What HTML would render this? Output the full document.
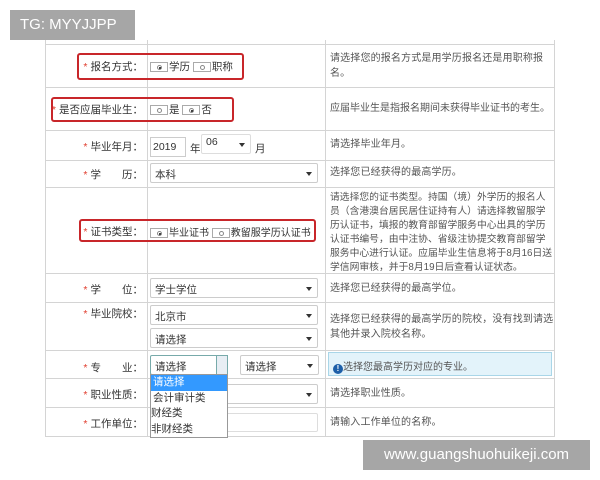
<!DOCTYPE html>
<html><head><meta charset="utf-8"><style>
*{margin:0;padding:0;box-sizing:border-box}
body{width:600px;height:480px;background:#fff;position:relative;overflow:hidden;font-family:"Liberation Sans","Noto Sans CJK SC",sans-serif;font-size:10.5px;color:#333}
.a{position:absolute}
.h{position:absolute;height:1px;background:#d4d4d4;left:45px;width:510px}
.v{position:absolute;width:1px;background:#d4d4d4;top:40px;height:397px}
.lb{position:absolute;right:457px;text-align:right;white-space:nowrap;font-size:10.5px}
.lb b{color:#e03a2a;font-weight:normal;margin-right:3px}
.d{position:absolute;left:330px;width:224px;color:#555;line-height:14.5px;font-size:10px;letter-spacing:0.15px}
.sel{position:absolute;height:20px;border:1px solid #ccc;border-radius:2px;background:#fff;padding:3px 4px;font-size:10.5px;color:#333}
.sel:after{content:"";position:absolute;right:5px;top:8px;border:3px solid transparent;border-top:4px solid #333}
.rad{display:inline-block;width:18px;height:10px;border:1px solid #aaa;vertical-align:middle;position:relative;margin-right:1px}
.rad:after{content:"";position:absolute;left:6px;top:1.5px;width:5px;height:5px;border:1px solid #888;border-radius:50%;box-sizing:border-box}
.rad.on:before{content:"";position:absolute;left:8px;top:3.5px;width:2px;height:2px;background:#000;border-radius:50%}
.red{position:absolute;border:2px solid #c8262a;border-radius:3px}
</style></head><body>
<div class="v" style="left:45px"></div><div class="v" style="left:147px"></div><div class="v" style="left:325px"></div><div class="v" style="left:554px"></div>
<div class="h" style="top:44px"></div><div class="h" style="top:87px"></div><div class="h" style="top:130px"></div><div class="h" style="top:160px"></div><div class="h" style="top:187px"></div><div class="h" style="top:273px"></div><div class="h" style="top:302px"></div><div class="h" style="top:350px"></div><div class="h" style="top:378px"></div><div class="h" style="top:407px"></div><div class="h" style="top:436px"></div>

<div class="a" style="left:10px;top:10px;width:125px;height:30px;background:#a6a6a6;color:#fff;font-size:15px;line-height:30px;padding-left:10px">TG: MYYJJPP</div>

<div class="lb" style="top:59px"><b>*</b>报名方式：</div>
<div class="a" style="left:150px;top:59px"><span class="rad on"></span>学历 <span class="rad"></span>职称</div>
<div class="red" style="left:77px;top:53px;width:167px;height:27px"></div>
<div class="d" style="top:52px">请选择您的报名方式是用学历报名还是用职称报名。</div>

<div class="lb" style="top:102px"><b>*</b>是否应届毕业生：</div>
<div class="a" style="left:150px;top:102px"><span class="rad"></span>是 <span class="rad on"></span>否</div>
<div class="red" style="left:51px;top:97px;width:183px;height:25px"></div>
<div class="d" style="top:102px;width:230px;letter-spacing:0">应届毕业生是指报名期间未获得毕业证书的考生。</div>

<div class="lb" style="top:139px"><b>*</b>毕业年月：</div>
<div class="a" style="left:150px;top:137px;width:36px;height:20px;border:1px solid #ccc;padding:3px 2px">2019</div>
<div class="a" style="left:190px;top:141px">年</div>
<div class="sel" style="left:201px;top:134px;width:50px;border-color:#ddd;padding-top:1px">06</div>
<div class="a" style="left:255px;top:141px">月</div>
<div class="d" style="top:138px">请选择毕业年月。</div>

<div class="lb" style="top:167px"><b>*</b>学　　历：</div>
<div class="sel" style="left:150px;top:163px;width:168px">本科</div>
<div class="d" style="top:166px">选择您已经获得的最高学历。</div>

<div class="lb" style="top:224px"><b>*</b>证书类型：</div>
<div class="a" style="left:150px;top:224px;white-space:nowrap;font-size:10px"><span class="rad on"></span>毕业证书 <span class="rad"></span>教留服学历认证书</div>
<div class="red" style="left:79px;top:219px;width:237px;height:23px"></div>
<div class="d" style="top:187px;padding-top:4px;line-height:14px;font-size:9.8px;letter-spacing:0">请选择您的证书类型。持国（境）外学历的报名人员（含港澳台居民居住证持有人）请选择教留服学历认证书，填报的教育部留学服务中心出具的学历认证书编号，由中注协、省级注协提交教育部留学服务中心进行认证。应届毕业生信息将于8月16日送学信网审核，并于8月19日后查看认证状态。</div>

<div class="lb" style="top:282px"><b>*</b>学　　位：</div>
<div class="sel" style="left:150px;top:278px;width:168px">学士学位</div>
<div class="d" style="top:282px">选择您已经获得的最高学位。</div>

<div class="lb" style="top:306px"><b>*</b>毕业院校：</div>
<div class="sel" style="left:150px;top:305px;width:168px">北京市</div>
<div class="sel" style="left:150px;top:328px;width:168px">请选择</div>
<div class="d" style="top:313px">选择您已经获得的最高学历的院校，没有找到请选其他并录入院校名称。</div>

<div class="lb" style="top:360px"><b>*</b>专　　业：</div>
<div class="sel" style="left:150px;top:355px;width:78px;border-color:#7aa">请选择</div>
<div class="a" style="left:216px;top:355px;width:12px;height:20px;background:#e8eef4;border:1px solid #7aa"></div>
<div class="sel" style="left:240px;top:355px;width:79px">请选择</div>
<div class="a" style="left:328px;top:352px;width:224px;height:24px;background:#e3f3fa;border:1px solid #a9d6e8;color:#555;padding:5px 4px;font-size:10px"><span style="display:inline-block;width:10px;height:10px;border-radius:50%;background:#1d5fa8;color:#fff;font-size:8px;line-height:10px;text-align:center;font-weight:bold;vertical-align:-1px">!</span>选择您最高学历对应的专业。</div>

<div class="lb" style="top:387px"><b>*</b>职业性质：</div>
<div class="sel" style="left:150px;top:384px;width:168px"></div>
<div class="d" style="top:387px">请选择职业性质。</div>

<div class="lb" style="top:416px"><b>*</b>工作单位：</div>
<div class="a" style="left:150px;top:413px;width:168px;height:19px;border:1px solid #ddd;border-radius:2px"></div>
<div class="d" style="top:416px">请输入工作单位的名称。</div>

<div class="a" style="left:150px;top:374px;width:78px;height:64px;background:#fff;border:1px solid #999;line-height:15.5px;font-size:10.5px">
<div style="background:#3399ff;color:#fff;padding-left:2px">请选择</div>
<div style="padding-left:2px">会计审计类</div><div>财经类</div><div>非财经类</div></div>

<div class="a" style="left:363px;top:440px;width:227px;height:30px;background:#a6a6a6;color:#fff;font-size:15px;line-height:30px;text-align:center">www.guangshuohuikeji.com</div>
</body></html>
